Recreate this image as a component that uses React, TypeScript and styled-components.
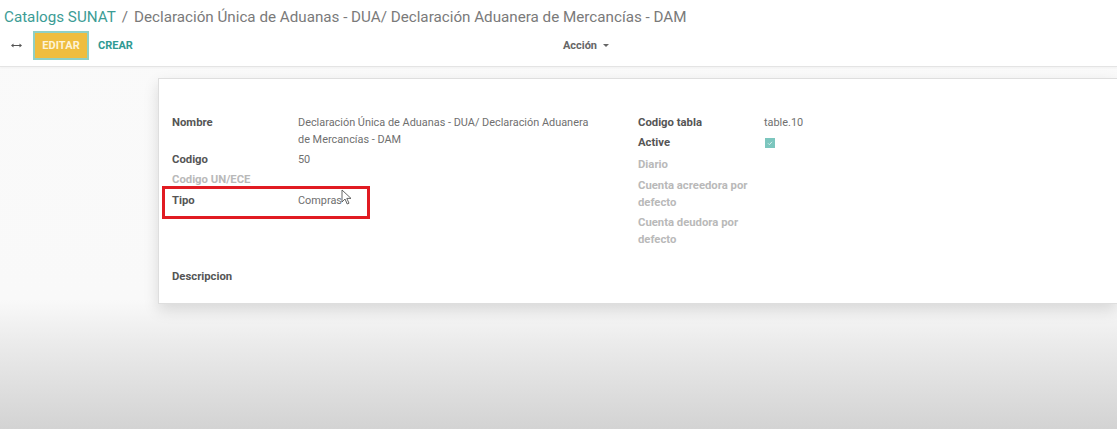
import React from 'react'
import styled, { createGlobalStyle } from 'styled-components'

const GlobalStyle = createGlobalStyle`
  html, body {
    margin: 0;
    padding: 0;
  }
  body {
    width: 1117px;
    height: 429px;
    overflow: hidden;
    font-family: Roboto, 'Liberation Sans', sans-serif;
    background: linear-gradient(
      to bottom,
      #fafafa 0px,
      #f9f9f9 300px,
      #ececec 340px,
      #d3d3d3 429px
    );
  }
`

const Page = styled.div`
  position: relative;
  width: 1117px;
  height: 429px;
`

const ControlPanel = styled.div`
  background: #fff;
  height: 66px;
  border-bottom: 1px solid #e4e4e4;
  box-shadow: 0 1px 2px rgba(0, 0, 0, 0.04);
`

const Breadcrumb = styled.div`
  padding: 6px 0 0 4px;
  height: 23px;
  font-size: 15.2px;
  line-height: 23px;
  color: #7a7a7a;
  white-space: nowrap;
`

const CrumbLink = styled.span`
  color: #3c9c95;
`

const Sep = styled.span`
  margin: 0 6px;
`

const Toolbar = styled.div`
  display: flex;
  align-items: center;
  height: 29px;
  margin-top: 2px;
  padding-left: 11px;
`

const Toggle = styled.span`
  display: flex;
  align-items: center;
  width: 22px;
`

const EditButton = styled.button`
  height: 29px;
  width: 56px;
  border: 2px solid #8fd0c6;
  background: #efbd3f;
  color: #fdf3d8;
  font-family: Roboto, 'Liberation Sans', sans-serif;
  font-size: 11px;
  font-weight: 700;
  letter-spacing: 0.1px;
  padding: 0;
`

const TextButton = styled.span`
  margin-left: 9px;
  color: #2f9a93;
  font-size: 11px;
  font-weight: 700;
`

const Action = styled.span`
  margin-left: 430px;
  color: #666;
  font-size: 11px;
  font-weight: 700;
  display: flex;
  align-items: center;
  gap: 6px;
`

const Caret = styled.span`
  width: 0;
  height: 0;
  border-left: 3px solid transparent;
  border-right: 3px solid transparent;
  border-top: 3px solid #666;
`

const Content = styled.div`
  padding: 11px 0 0 158px;
`

const Sheet = styled.div`
  background: #fff;
  border: 1px solid #dedede;
  border-right: none;
  height: 226px;
  box-sizing: border-box;
  padding: 33px 0 0 13px;
  box-shadow: 0 6px 14px rgba(0, 0, 0, 0.13);
`

const Groups = styled.div`
  display: grid;
  grid-template-columns: 466px 1fr;
`

const Group = styled.div`
  display: grid;
  grid-template-columns: 126px 298px;
  align-content: start;
`

const Label = styled.div<{ $empty?: boolean }>`
  font-size: 11.3px;
  font-weight: 700;
  line-height: 17px;
  padding: 2px 10px 1.2px 0;
  color: ${(p) => (p.$empty ? '#b9b9b9' : '#555')};
`

const Value = styled.div`
  font-size: 10.9px;
  line-height: 17px;
  padding: 2px 0 1.2px;
  color: #6f6f6f;
`

const Check = styled.span`
  display: inline-block;
  margin-top: 4px;
  margin-left: 1px;
  width: 10px;
  height: 10px;
  background: #7cc6be;
  position: relative;
`

const Description = styled(Label)`
  margin-top: 17px;
`

const Highlight = styled.div`
  position: absolute;
  left: 162px;
  top: 186px;
  width: 202px;
  height: 27px;
  border: 3px solid #e11b22;
`

const Cursor = styled.svg`
  position: absolute;
  left: 341px;
  top: 189px;
`

const App = () => {
  return (
    <Page>
      <GlobalStyle />
      <ControlPanel>
        <Breadcrumb>
          <CrumbLink>Catalogs SUNAT</CrumbLink>
          <Sep>/</Sep>
          Declaración Única de Aduanas - DUA/ Declaración Aduanera de Mercancías - DAM
        </Breadcrumb>
        <Toolbar>
          <Toggle>
            <svg width="11" height="5" viewBox="0 0 11 5">
              <path d="M1 2.5h9" stroke="#555" strokeWidth="1" />
              <path d="M0 2.5L2.5 0.5v4z M11 2.5L8.5 0.5v4z" fill="#555" />
            </svg>
          </Toggle>
          <EditButton>EDITAR</EditButton>
          <TextButton>CREAR</TextButton>
          <Action>
            Acción <Caret />
          </Action>
        </Toolbar>
      </ControlPanel>
      <Content>
        <Sheet>
          <Groups>
            <Group>
              <Label>Nombre</Label>
              <Value>
                Declaración Única de Aduanas - DUA/ Declaración Aduanera de Mercancías - DAM
              </Value>
              <Label>Codigo</Label>
              <Value>50</Value>
              <Label $empty>Codigo UN/ECE</Label>
              <Value />
              <Label>Tipo</Label>
              <Value>Compras</Value>
            </Group>
            <Group>
              <Label>Codigo tabla</Label>
              <Value>table.10</Value>
              <Label>Active</Label>
              <Value>
                <Check>
                  <svg width="10" height="10" viewBox="0 0 10 10" style={{ position: 'absolute', left: 0, top: 0 }}>
                    <path d="M3 5.3l1.4 1.4L7 3.8" stroke="#d8f0ec" strokeWidth="1" fill="none" />
                  </svg>
                </Check>
              </Value>
              <Label $empty>Diario</Label>
              <Value />
              <Label $empty>Cuenta acreedora por defecto</Label>
              <Value />
              <Label $empty>Cuenta deudora por defecto</Label>
              <Value />
            </Group>
          </Groups>
          <Description>Descripcion</Description>
        </Sheet>
      </Content>
      <Highlight />
      <Cursor width="11" height="16" viewBox="0 0 11 16">
        <path d="M1 1v12l3-3 2.2 5 1.8-.8-2.2-4.8H10z" fill="#fff" stroke="#555" strokeWidth="0.9" strokeLinejoin="round" />
      </Cursor>
    </Page>
  )
}

export default App
